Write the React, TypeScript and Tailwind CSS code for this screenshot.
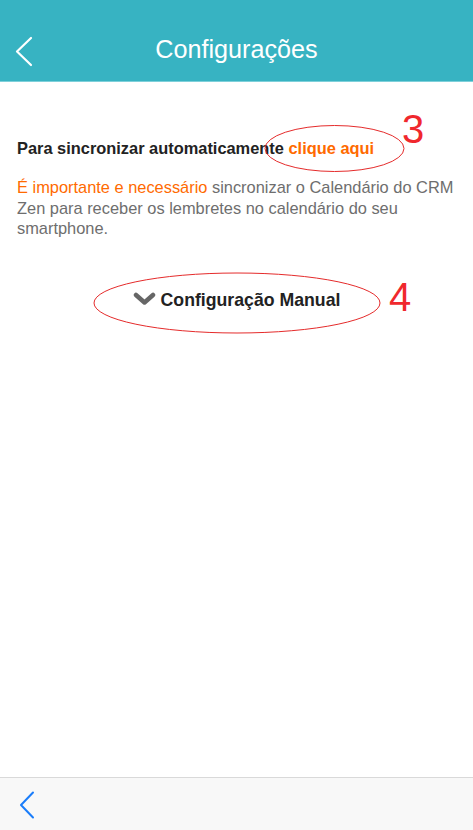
import React from "react";

export default function App() {
  return (
    <div
      className="relative w-[473px] h-[830px] bg-white flex flex-col overflow-hidden"
      style={{ fontFamily: '"Liberation Sans", Arial, sans-serif' }}
    >
      <header className="h-[82px] shrink-0 bg-[#37b3c2] border-b border-[#7fd0da] flex items-center justify-center relative">
        <svg className="absolute left-[14px] top-[36px]" width="20" height="31" viewBox="0 0 20 31" fill="none">
          <path d="M17 2 L3 15.5 L17 29" stroke="white" strokeWidth="2.2" strokeLinecap="round" strokeLinejoin="round" />
        </svg>
        <h1 className="text-white text-[25.2px] leading-none pt-[18px]">Configurações</h1>
      </header>

      <main className="flex-1 flex flex-col px-[17px]">
        <p className="mt-[56px] text-[16.4px] font-bold text-[#222] leading-[20px]">
          Para sincronizar automaticamente <span className="text-[#ff6a00]">clique aqui</span>
        </p>
        <p className="mt-[19px] text-[16.4px] text-[#6e6e6e] leading-[20.5px]">
          <span className="text-[#ff6a00]">É importante e necessário</span> sincronizar o Calendário do CRM Zen para receber os lembretes no calendário do seu smartphone.
        </p>
        <div className="mt-[48px] flex items-center justify-center gap-[5px] text-[17.7px] font-bold text-[#222]">
          <svg width="23" height="14" viewBox="0 0 23 14" className="mt-[-1px]">
            <path d="M3 3 L11.5 10.5 L20 3" stroke="#666" strokeWidth="4.5" fill="none" strokeLinecap="round" strokeLinejoin="round" />
          </svg>
          <span>Configuração Manual</span>
        </div>
      </main>

      <footer className="h-[53px] shrink-0 bg-[#f8f8f8] border-t border-[#d9d9d9] flex items-center">
        <svg className="ml-[19px] mt-[2px]" width="16" height="28" viewBox="0 0 16 28" fill="none">
          <path d="M14 1.5 L2 14 L14 26.5" stroke="#1a7dfa" strokeWidth="2" strokeLinecap="round" strokeLinejoin="round" />
        </svg>
      </footer>

      {/* annotations */}
      <svg className="absolute left-0 top-0 pointer-events-none" width="473" height="830">
        <ellipse cx="334.5" cy="148.5" rx="69.5" ry="23" stroke="#e52b2b" strokeWidth="1" fill="none" />
        <ellipse cx="237" cy="303" rx="143" ry="30" stroke="#e52b2b" strokeWidth="1" fill="none" />
      </svg>
      <span className="absolute left-[402px] top-[109px] text-[40px] leading-none text-[#f0282d]">3</span>
      <span className="absolute left-[389px] top-[277px] text-[40px] leading-none text-[#f0282d]">4</span>
    </div>
  );
}
